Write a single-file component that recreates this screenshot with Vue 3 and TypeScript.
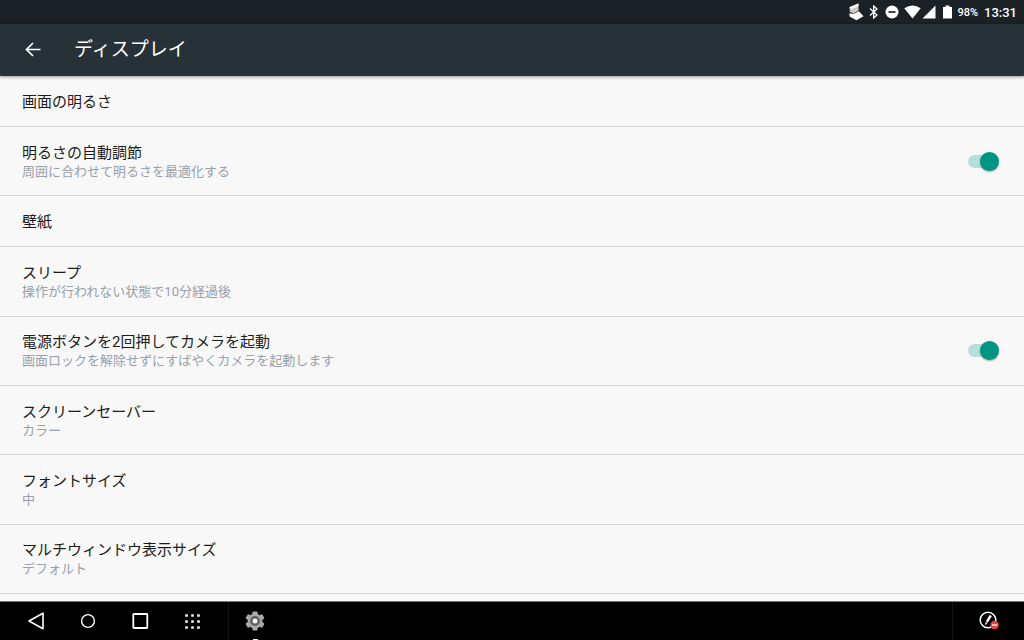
<script setup lang="ts">
import { reactive } from 'vue'

interface Setting {
  id: string
  title: string
  summary?: string
  toggle?: boolean
}

const settings: Setting[] = [
  { id: 'brightness', title: '画面の明るさ' },
  { id: 'auto', title: '明るさの自動調節', summary: '周囲に合わせて明るさを最適化する', toggle: true },
  { id: 'wallpaper', title: '壁紙' },
  { id: 'sleep', title: 'スリープ', summary: '操作が行われない状態で10分経過後' },
  { id: 'camera', title: '電源ボタンを2回押してカメラを起動', summary: '画面ロックを解除せずにすばやくカメラを起動します', toggle: true },
  { id: 'saver', title: 'スクリーンセーバー', summary: 'カラー' },
  { id: 'font', title: 'フォントサイズ', summary: '中' },
  { id: 'window', title: 'マルチウィンドウ表示サイズ', summary: 'デフォルト' },
]

const enabled = reactive<Record<string, boolean>>({ auto: true, camera: true })
const dots = [1.5, 7.5, 13.5]
const teeth = [0, 60, 120, 180, 240, 300]
</script>

<template>
  <div class="screen">
    <div class="status">
      <svg width="16" height="18" viewBox="0 0 16 18">
        <path d="M1.300 4.200 10.500 0.500V8L5.500 10.500 2 9Z" fill="#c9c9c9" />
        <path d="M1.300 4.200 10.500 0.500V3L4 6Z" fill="#fff" />
        <path d="M1.300 10.500 5.500 10.500 10.800 8.200 15.600 13.200 8.500 17.200 1.600 13.500Z" fill="#fff" />
        <path d="M1.500 9.500 5.500 10.600 10.500 8" fill="none" stroke="#555" stroke-width="0.800" />
      </svg>
      <svg class="s-bt" width="10" height="14" viewBox="0 0 10 14">
        <path d="M1 3.500 8 10 4.700 13V1L8 4 1 10.500" fill="none" stroke="#fff" stroke-width="1.300" />
      </svg>
      <svg class="s-dnd" width="14" height="14" viewBox="0 0 14 14">
        <circle cx="7" cy="7" r="6.500" fill="#fff" />
        <path d="M3.500 7h7" stroke="#1b2125" stroke-width="1.700" />
      </svg>
      <svg class="s-wifi" width="17" height="14" viewBox="0 0 17 14">
        <path d="M0.300 3.300Q8.500-2.300 16.700 3.300L8.500 13.500Z" fill="#fff" />
      </svg>
      <svg class="s-cell" width="14" height="14" viewBox="0 0 14 14">
        <path d="M13.500 0.500v13H0.500Z" fill="#fff" />
      </svg>
      <svg class="s-batt" width="9" height="14" viewBox="0 0 9 14">
        <path d="M2.500 0.500h4V2H9v11.500H0V2h2.500Z" fill="#fff" />
      </svg>
      <span class="percent">98%</span>
      <time class="clock">13:31</time>
    </div>

    <header class="bar">
      <button class="back" type="button" aria-label="戻る">
        <svg width="16" height="16" viewBox="0 0 16 16">
          <path d="M15.500 7.500H1.500M8 1 1.500 7.500l6.500 6.500" fill="none" stroke="#fff" stroke-width="1.700" />
        </svg>
      </button>
      <h1>ディスプレイ</h1>
    </header>

    <main class="list">
      <template v-for="s in settings" :key="s.id">
        <label v-if="s.toggle" class="row double" :for="s.id">
          <span class="text">
            <span class="title">{{ s.title }}</span>
            <span class="summary">{{ s.summary }}</span>
          </span>
          <input :id="s.id" v-model="enabled[s.id]" class="switch" type="checkbox" role="switch" />
        </label>
        <button v-else type="button" class="row" :class="{ double: s.summary }">
          <span class="text">
            <span class="title">{{ s.title }}</span>
            <span v-if="s.summary" class="summary">{{ s.summary }}</span>
          </span>
        </button>
      </template>
    </main>

    <nav class="nav">
      <div class="keys">
        <button type="button" aria-label="戻るキー">
          <svg width="18" height="20" viewBox="0 0 18 20">
            <path d="M16 2.200v15.600L2 10Z" fill="none" stroke="#fff" stroke-width="1.600" stroke-linejoin="round" />
          </svg>
        </button>
        <button type="button" aria-label="ホーム">
          <svg width="18" height="18" viewBox="0 0 18 18">
            <circle cx="9" cy="9" r="6.400" fill="none" stroke="#fff" stroke-width="1.400" />
          </svg>
        </button>
        <button type="button" aria-label="履歴">
          <svg width="18" height="18" viewBox="0 0 18 18">
            <rect x="2.300" y="2" width="14" height="14" rx="0.500" fill="none" stroke="#fff" stroke-width="1.800" />
          </svg>
        </button>
        <button type="button" aria-label="アプリ一覧">
          <svg width="15" height="15" viewBox="0 0 15 15">
            <template v-for="y in dots" :key="y">
              <rect v-for="x in dots" :key="x" :x="x - 1.300" :y="y - 1.300" width="2.600" height="2.600" rx="0.600" fill="#fff" />
            </template>
          </svg>
        </button>
      </div>
      <div class="tasks">
        <button type="button" class="task" aria-label="設定">
          <svg width="20" height="20" viewBox="-10 -10 20 20">
            <rect v-for="t in teeth" :key="t" x="-2.600" y="-9.600" width="5.200" height="7" rx="1" fill="#a9a9a9" :transform="`rotate(${t})`" />
            <circle r="7.400" fill="#a9a9a9" />
            <circle r="4" fill="#888" stroke="#606060" stroke-width="2" />
            <circle r="2.300" fill="#fff" />
          </svg>
        </button>
      </div>
      <div class="tray">
        <button type="button" aria-label="ペン">
          <svg width="20" height="20" viewBox="0 0 20 20">
            <circle cx="9" cy="9" r="7.800" fill="none" stroke="#fff" stroke-width="1.500" />
            <path d="M11.800 4.500 7.800 11" stroke="#fff" stroke-width="2.400" />
            <path d="m6.500 11 2 1.200-2.300 2Z" fill="#fff" />
            <circle cx="15.600" cy="14" r="4.200" fill="#e8413e" />
            <path d="M13 14h5.200" stroke="#ffd9d7" stroke-width="1.600" />
          </svg>
        </button>
      </div>
    </nav>
  </div>
</template>

<style>
body {
  margin: 0;
}
</style>

<style scoped>
.screen {
  display: flex;
  flex-direction: column;
  height: 100vh;
  overflow: hidden;
  background: #f8f8f8;
  font-family: Roboto, "Noto Sans CJK JP", sans-serif;
}
button {
  margin: 0;
  padding: 0;
  border: 0;
  background: none;
  font: inherit;
  color: inherit;
}
svg {
  display: block;
  flex: none;
}
.status {
  display: flex;
  flex: none;
  align-items: center;
  justify-content: flex-end;
  height: 24px;
  padding-right: 7px;
  background: #1b2125;
  color: #fff;
}
.s-bt {
  margin-left: 5px;
}
.s-dnd {
  margin-left: 6px;
}
.s-wifi {
  margin-left: 5px;
}
.s-cell {
  margin-left: 1px;
}
.s-batt {
  margin-left: 7px;
}
.percent {
  margin-left: 5px;
  font-size: 11px;
  font-weight: 500;
}
.clock {
  margin-left: 6px;
  font-size: 13px;
  font-weight: 500;
}
.bar {
  display: flex;
  flex: none;
  align-items: center;
  height: 52px;
  padding-left: 25px;
  background: #263238;
  color: #fff;
  box-shadow: 0 1px 3px rgba(0, 0, 0, 0.4);
  z-index: 1;
}
h1 {
  margin: 0 0 0 33px;
  font-size: 19px;
  line-height: 24px;
  font-weight: 400;
}
.list {
  display: flex;
  flex: 1;
  flex-direction: column;
  min-height: 0;
  padding-bottom: 7px;
}
.row {
  display: flex;
  flex: none;
  align-items: center;
  justify-content: space-between;
  box-sizing: border-box;
  min-height: 51px;
  padding: 0 25px 0 22px;
  border-bottom: 1px solid #d6d8d8;
  text-align: left;
}
.double {
  flex: 1 0 auto;
  min-height: 69px;
}
.text {
  display: flex;
  flex-direction: column;
  padding-top: 1px;
}
.title {
  font-size: 15px;
  line-height: 20px;
  color: #1c1c1c;
}
.summary {
  font-size: 13px;
  line-height: 18px;
  color: #97a1ab;
}
.switch {
  appearance: none;
  display: flex;
  align-items: center;
  flex: none;
  width: 25px;
  height: 13px;
  margin: 0 6px 0 0;
  background: #b6dfd9;
  border-radius: 7px;
}
.switch::before {
  content: "";
  flex: none;
  width: 19px;
  height: 19px;
  border-radius: 50%;
  background: #fafafa;
  box-shadow: 0 1px 2px rgba(0, 0, 0, 0.35);
}
.switch:checked {
  justify-content: flex-end;
}
.switch:checked::before {
  margin-right: -6px;
  background: #009483;
}
.nav {
  display: flex;
  flex: none;
  height: 39px;
  border-top: 1px solid #777;
  box-sizing: border-box;
  background: #000;
}
.nav button {
  display: flex;
  align-items: center;
  justify-content: center;
  width: 52px;
  height: 100%;
}
.keys {
  display: flex;
  padding: 0 10px;
  border-right: 1px solid #141414;
}
.tasks {
  flex: 1;
}
.nav .task {
  position: relative;
}
.task::after {
  content: "";
  position: absolute;
  bottom: 0;
  width: 5px;
  height: 1px;
  background: #fff;
}
.tray {
  display: flex;
  padding: 0 9px 0 10px;
  border-left: 1px solid #141414;
}
</style>
